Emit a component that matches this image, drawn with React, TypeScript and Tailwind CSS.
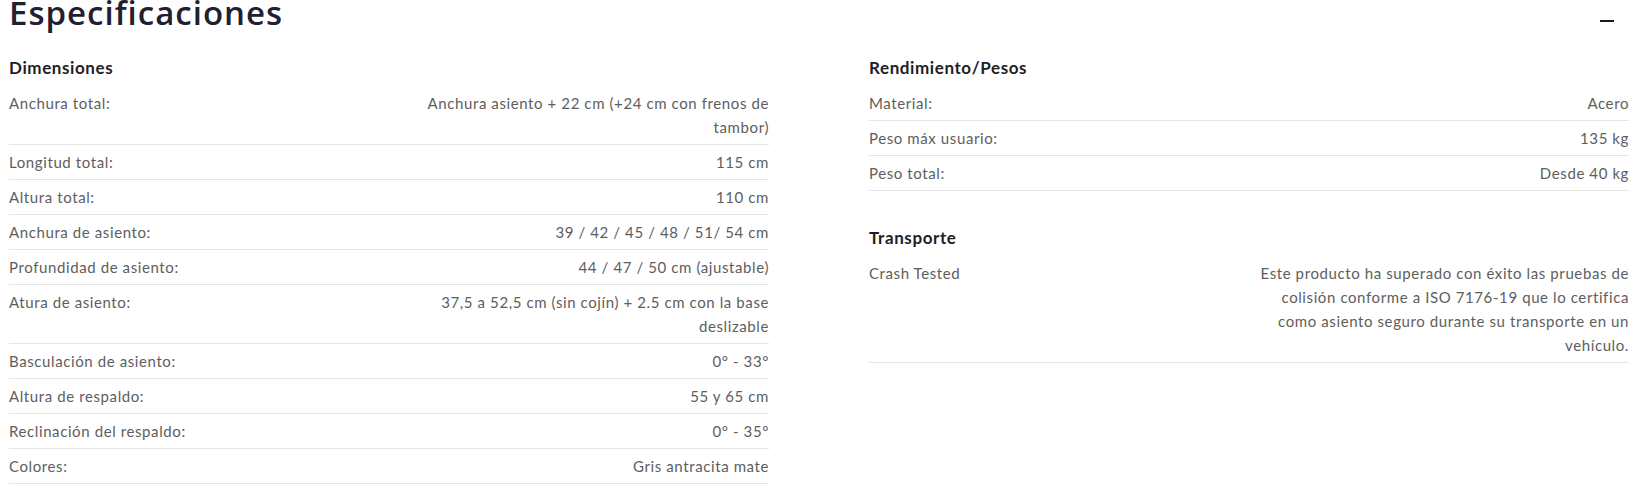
import React from 'react';

interface Row {
  label: string;
  value: string;
}

interface SectionProps {
  title: string;
  rows: Row[];
  className?: string;
}

const dimensiones: Row[] = [
  { label: 'Anchura total:', value: 'Anchura asiento + 22 cm (+24 cm con frenos de tambor)' },
  { label: 'Longitud total:', value: '115 cm' },
  { label: 'Altura total:', value: '110 cm' },
  { label: 'Anchura de asiento:', value: '39 / 42 / 45 / 48 / 51/ 54 cm' },
  { label: 'Profundidad de asiento:', value: '44 / 47 / 50 cm (ajustable)' },
  { label: 'Atura de asiento:', value: '37,5 a 52,5 cm (sin cojín) + 2.5 cm con la base deslizable' },
  { label: 'Basculación de asiento:', value: '0° - 33°' },
  { label: 'Altura de respaldo:', value: '55 y 65 cm' },
  { label: 'Reclinación del respaldo:', value: '0° - 35°' },
  { label: 'Colores:', value: 'Gris antracita mate' },
];

const pesos: Row[] = [
  { label: 'Material:', value: 'Acero' },
  { label: 'Peso máx usuario:', value: '135 kg' },
  { label: 'Peso total:', value: 'Desde 40 kg' },
];

const transporte: Row[] = [
  {
    label: 'Crash Tested',
    value:
      'Este producto ha superado con éxito las pruebas de colisión conforme a ISO 7176-19 que lo certifica como asiento seguro durante su transporte en un vehículo.',
  },
];

const Section: React.FC<SectionProps> = ({ title, rows, className }) => {
  return (
    <div className={className}>
      {/* Section title */}
      <h3 className="text-[17px] leading-6 font-bold tracking-[0.6px] text-[#1e1e26] mb-[6px]">{title}</h3>

      {/* Rows */}
      {rows.map((row) => (
        <div
          key={row.label}
          className="grid grid-cols-2 py-[5px] border-b border-[#e6e6e6] text-[15px] leading-6 tracking-[0.6px] text-[#5e5e5e]"
        >
          <div>{row.label}</div>
          <div className="text-right pl-[4px]">{row.value}</div>
        </div>
      ))}
    </div>
  );
};

export default function App() {
  return (
    <div className="bg-white w-[1652px] h-[499px] overflow-hidden font-['Lato',sans-serif]">
      {/* Header */}
      <div className="flex items-start justify-between pl-[9px] pr-[38px] -mt-[6px]">
        <h2 className="text-[33px] leading-[38px] font-semibold tracking-[1px] text-[#1f2030] font-['Open_Sans',sans-serif]">
          Especificaciones
        </h2>
        <span className="mt-[26px] block w-[14px] h-[2px] bg-[#1a1a1a]" />
      </div>

      {/* Columns */}
      <div className="grid grid-cols-2 gap-[100px] pl-[9px] pr-[23px] mt-[24px]">
        <Section title="Dimensiones" rows={dimensiones} />
        <div>
          <Section title="Rendimiento/Pesos" rows={pesos} />
          <Section title="Transporte" rows={transporte} className="mt-[35px]" />
        </div>
      </div>
    </div>
  );
}
